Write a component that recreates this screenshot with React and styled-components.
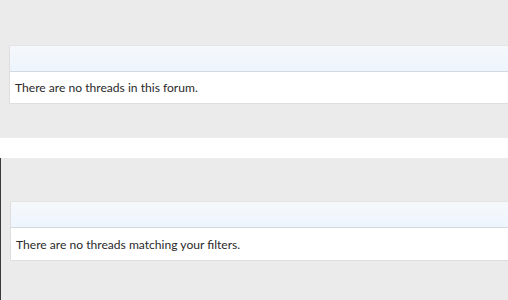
import React from "react";
import styled, { createGlobalStyle } from "styled-components";

const Global = createGlobalStyle`
  html, body { margin: 0; padding: 0; background: #ebebeb; }
  body { font-family: "Lato", "Segoe UI", sans-serif; }
`;

const Page = styled.div`
  width: 508px;
  height: 300px;
  overflow: hidden;
  background: #ebebeb;
  display: flex;
  flex-direction: column;
`;

const Section = styled.div`
  padding: ${(p) => p.$pad};
  background: #ebebeb;
  border-left: ${(p) => (p.$edge ? "1px solid #3a3a3a" : "none")};
  flex: ${(p) => (p.$grow ? 1 : "none")};
`;

const Band = styled.div`
  height: 20px;
  background: #ffffff;
`;

const Block = styled.div`
  background: #ffffff;
  border: 1px solid #dedede;
  border-right: none;
  border-top-color: #e4e4e4;
  border-radius: 2px 0 0 2px;
  margin-right: -4px;
`;

const Header = styled.div`
  height: 25px;
  background: linear-gradient(to bottom, #f6f8fb, #edf5fd);
  border-bottom: 1px solid #d3dade;
`;

const Body = styled.div`
  height: ${(p) => p.$h}px;
  display: flex;
  align-items: center;
  padding: 0 5px;
  font-size: 12.1px;
  color: #2a2a2a;
`;

export default function App() {
  return (
    <>
      <Global />
      <Page>
        <Section $pad="45px 0 34px 9px">
          <Block>
            <Header />
            <Body $h={31}>There are no threads in this forum.</Body>
          </Block>
        </Section>
        <Band />
        <Section $edge $grow $pad="43px 0 0 9px">
          <Block>
            <Header />
            <Body $h={32}>There are no threads matching your filters.</Body>
          </Block>
        </Section>
      </Page>
    </>
  );
}
